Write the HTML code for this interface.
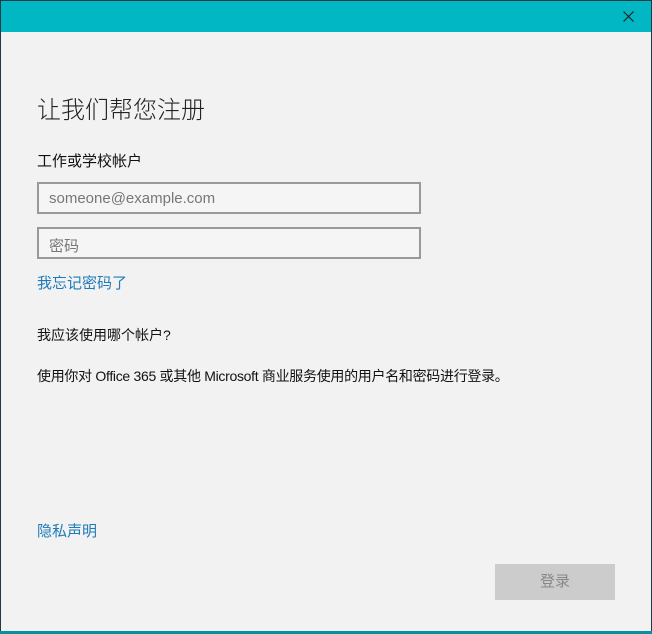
<!DOCTYPE html>
<html><head><meta charset="utf-8"><style>
*{margin:0;padding:0;box-sizing:border-box}
body{width:652px;height:634px;background:#1d3a45;position:relative;overflow:hidden;font-family:"Liberation Sans","Noto Sans CJK SC",sans-serif;color:#111}
#win{position:absolute;left:1px;top:1px;width:650px;height:630px;background:#f2f2f2}
#bar{position:absolute;left:0;top:0;width:650px;height:31px;background:#00b7c3}
.t{position:absolute;left:37px;white-space:nowrap}
.in{position:absolute;left:37px;width:384px;height:32px;border:2px solid #999;background:#f5f5f5;font-size:15px;color:#777;padding:6px 0 0 10px}
.lk{color:#1f7ab8}
#btn{position:absolute;left:495px;top:564px;width:120px;height:36px;background:#ccc;color:#888;text-align:center;font-size:15px;line-height:36px}
#bl{position:absolute;left:0;bottom:0;width:652px;height:3px;background:#0a8fa0}
</style></head><body>
<div id="win">
<div id="bar"><svg style="position:absolute;left:622px;top:10px" width="11" height="11"><path d="M0.5 0.5L10.5 10.5M10.5 0.5L0.5 10.5" stroke="#222" stroke-width="1.2"/></svg></div>
</div>
<div class="t" style="top:90px;font-size:24px;font-weight:300;color:#222">让我们帮您注册</div>
<div class="t" style="top:150px;font-size:15px">工作或学校帐户</div>
<div class="in" style="top:182px">someone@example.com</div>
<div class="in" style="top:227px">密码</div>
<div class="t lk" style="top:272px;font-size:15px">我忘记密码了</div>
<div class="t" style="top:325px;font-size:14px">我应该使用哪个帐户?</div>
<div class="t" style="top:366px;font-size:14px;letter-spacing:-0.3px">使用你对 Office 365 或其他 Microsoft 商业服务使用的用户名和密码进行登录。</div>
<div class="t lk" style="top:520px;font-size:15px">隐私声明</div>
<div id="btn">登录</div>
<div id="bl"></div>
</body></html>
